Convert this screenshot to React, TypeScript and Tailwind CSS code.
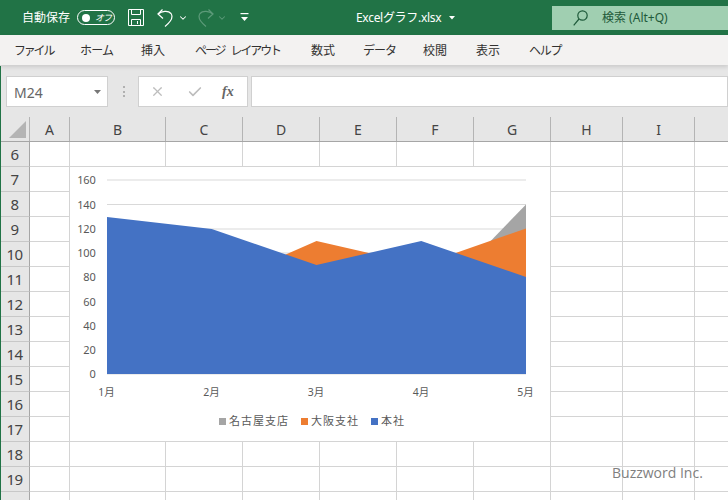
import { ChevronDown, Check, X } from "lucide-react";

const font = "font-['Noto_Sans','Noto_Sans_CJK_JP',sans-serif]";

const columns = [
  { name: "A", w: "w-[40px]" },
  { name: "B", w: "w-[96px]" },
  { name: "C", w: "w-[77px]" },
  { name: "D", w: "w-[77px]" },
  { name: "E", w: "w-[77px]" },
  { name: "F", w: "w-[77px]" },
  { name: "G", w: "w-[77px]" },
  { name: "H", w: "w-[72px]" },
  { name: "I", w: "w-[72px]" },
  { name: "", w: "w-[40px]" },
];

const rows = [6, 7, 8, 9, 10, 11, 12, 13, 14, 15, 16, 17, 18, 19, 20];

const tabs = [
  { label: "ファイル", cls: "w-[38px] ml-[14px] tracking-[-2.2px]" },
  { label: "ホーム", cls: "w-[34px] ml-[28px] tracking-[-0.8px]" },
  { label: "挿入", cls: "w-[26px] ml-[27px] tracking-[0px]" },
  { label: "ページ レイアウト", cls: "w-[87px] ml-[28px] tracking-[-2.1px] [word-spacing:5px]" },
  { label: "数式", cls: "w-[26px] ml-[29px] tracking-[0px]" },
  { label: "データ", cls: "w-[33px] ml-[26px] tracking-[-1px]" },
  { label: "校閲", cls: "w-[26px] ml-[27px] tracking-[0px]" },
  { label: "表示", cls: "w-[26px] ml-[27px] tracking-[0px]" },
  { label: "ヘルプ", cls: "w-[32px] ml-[27px] tracking-[-1.2px]" },
];

function TitleBar() {
  return (
    <div className="h-[35px] bg-[#217346] flex items-center text-white shrink-0 relative">
      <span className="ml-[22px] text-[12px] w-[48px] whitespace-nowrap">自動保存</span>
      <div className="ml-[7px] w-[38px] h-[15px] rounded-full border border-white flex items-center justify-between pl-[4px] pr-[3px]">
        <div className="w-[8px] h-[8px] rounded-full bg-white" />
        <span className="text-[9px] italic leading-none tracking-[-1px]">オフ</span>
      </div>
      <svg className="ml-[13px]" width="16" height="17" viewBox="0 0 16 17" fill="none" stroke="#fff" strokeWidth="1">
        <path d="M0.5 0.5h15v16h-15z" />
        <path d="M3.5 0.5v5h9v-5" />
        <path d="M3.5 16.5v-6h9v6" />
        <path d="M9.5 12v3" />
      </svg>
      <svg className="ml-[13px]" width="16" height="18" viewBox="0 0 16 18" fill="none" stroke="#fff" strokeWidth="1.2">
        <path d="M5.500 0.500L1 5l5 4.500" />
        <path d="M1 5C5 2 11 1 14 4.500 17 9 13 13.500 8 17.500" />
      </svg>
      <ChevronDown className="ml-[5px] text-white" size={10} strokeWidth={2.5} />
      <svg className="ml-[10px]" width="16" height="18" viewBox="0 0 16 18" fill="none" stroke="#5c9a79" strokeWidth="1.2">
        <path d="M10.500 0.500L15 5l-5 4.500" />
        <path d="M15 5C11 2 5 1 2 4.500-1 9 3 13.500 8 17.500" />
      </svg>
      <ChevronDown className="ml-[3px] text-[#5c9a79]" size={10} strokeWidth={2.5} />
      <svg className="ml-[13px]" width="9" height="9" viewBox="0 0 9 9" fill="#fff">
        <rect x="0.500" y="0" width="8" height="1.200" />
        <path d="M1 4h7l-3.500 4z" />
      </svg>
      <div className="absolute left-[356px] top-0 h-[35px] flex items-center">
        <span className="text-[12px] tracking-[-0.3px] whitespace-nowrap">Excelグラフ.xlsx</span>
        <svg className="ml-[8px]" width="6" height="4" viewBox="0 0 6 4" fill="#fff"><path d="M0 0h6l-3 3.500z" /></svg>
      </div>
      <div className="absolute left-[552px] top-[6px] w-[176px] h-[24px] bg-[#a0cfb1] flex items-center text-[#1e5a3a]">
        <svg className="ml-[21px]" width="15" height="16" viewBox="0 0 15 16" fill="none" stroke="currentColor" strokeWidth="1.2">
          <circle cx="9.500" cy="5.500" r="4.700" />
          <path d="M6 9L0.700 15.300" />
        </svg>
        <span className="ml-[14px] text-[12px] whitespace-nowrap">検索 (Alt+Q)</span>
      </div>
    </div>
  );
}

function RibbonTabs() {
  return (
    <div className="h-[30px] pt-[1px] bg-[#f3f2f1] flex items-center text-[12px] text-[#323130] shrink-0 shadow-[0_2px_4px_rgba(0,0,0,0.12)] z-10">
      {tabs.map((t) => (
        <span key={t.label} className={`${t.cls} whitespace-pre`}>{t.label}</span>
      ))}
    </div>
  );
}

function FormulaBar() {
  return (
    <div className="h-[52px] bg-[#e6e6e6] flex items-start pt-[11px] pl-[6px] shrink-0">
      <div className="w-[102px] h-[31px] pt-[1px] bg-white border border-[#d0d0d0] flex items-center justify-between pl-[7px] pr-[6px] text-[14px] text-[#666]">
        <span>M24</span>
        <svg width="7" height="4" viewBox="0 0 7 4" fill="#777"><path d="M0 0h7l-3.500 4z" /></svg>
      </div>
      <div className="ml-[14px] w-[3px] h-[11px] mt-[10px] flex flex-col justify-between items-center">
        <div className="w-[2px] h-[2px] bg-[#b0b0b0]" />
        <div className="w-[2px] h-[2px] bg-[#b0b0b0]" />
        <div className="w-[2px] h-[2px] bg-[#b0b0b0]" />
      </div>
      <div className="ml-[13px] w-[110px] h-[31px] bg-white border border-[#d0d0d0] flex items-center text-[#bdbdbd]">
        <X className="ml-[11px]" size={15} strokeWidth={2} />
        <Check className="ml-[22px]" size={16} strokeWidth={2.5} />
        <span className="ml-[19px] text-[14px] italic font-bold text-[#666] font-['Liberation_Serif',serif] whitespace-nowrap">fx</span>
      </div>
      <div className="ml-[3px] flex-1 h-[31px] bg-white border border-[#d0d0d0]" />
    </div>
  );
}

function ColumnHeader() {
  return (
    <div className="flex h-[25px] border-b border-[#a6a6a6] bg-[#e6e6e6]">
      <div className="w-[30px] shrink-0 border-r border-[#b4b4b4] flex items-end justify-end pr-[3px] pb-[3px]">
        <svg width="17" height="17" viewBox="0 0 17 17" fill="#b4b4b4"><path d="M17 0v17H0z" /></svg>
      </div>
      {columns.map((c) => (
        <div key={c.w + c.name} className={`${c.w} shrink-0 border-r border-[#b4b4b4] flex items-center justify-center text-[14px] text-[#444]`}>
          {c.name}
        </div>
      ))}
    </div>
  );
}

function SheetRows() {
  return (
    <>
      {rows.map((r) => (
        <div key={r} className="flex h-[25px]">
          <div className="w-[30px] shrink-0 bg-[#e6e6e6] border-r border-b border-r-[#a6a6a6] border-b-[#c8c8c8] flex items-center justify-center text-[15px] tracking-[-0.5px] text-[#444]">
            {r}
          </div>
          {columns.map((c) => (
            <div key={c.w + c.name} className={`${c.w} shrink-0 border-r border-b border-[#d4d4d4] bg-white`} />
          ))}
        </div>
      ))}
    </>
  );
}

// y軸のラベルと目盛り線
const ticks = [
  { v: 160, y: 180 },
  { v: 140, y: 204.500 },
  { v: 120, y: 229 },
  { v: 100, y: 253 },
  { v: 80, y: 277 },
  { v: 60, y: 301.500 },
  { v: 40, y: 326 },
  { v: 20, y: 350 },
  { v: 0, y: 374 },
];
const months = [
  { m: "1月", x: 106.500 },
  { m: "2月", x: 211.500 },
  { m: "3月", x: 316 },
  { m: "4月", x: 421 },
  { m: "5月", x: 525.500 },
];

function Chart() {
  return (
    <div className="absolute left-[70px] top-[50px] w-[480px] h-[274px] bg-white">
      <svg width="480" height="274" viewBox="70 167 480 274" className="block" fontFamily="'Noto Sans','Noto Sans CJK JP',sans-serif" fontSize="11" fill="#595959">
        {ticks.map((t) => (
          <g key={t.v}>
            <line x1="107" x2="526" y1={t.y} y2={t.y} stroke="#d9d9d9" strokeWidth="1" />
            <text x="95.500" y={t.y + 4} textAnchor="end" letterSpacing="-0.2">{t.v}</text>
          </g>
        ))}
        <polygon points="421,313 526,204.500 526,374 421,374" fill="#a5a5a5" />
        <polygon points="211.750,287 316.500,241 421.250,265 526,228.500 526,374 211.750,374" fill="#ed7d31" />
        <polygon points="107,217 211.750,229 316.500,265 421.250,241 526,277 526,374 107,374" fill="#4472c4" />
        {months.map((m) => (
          <text key={m.m} x={m.x} y="396" textAnchor="middle" fontSize="10.500">{m.m}</text>
        ))}
        <rect x="219" y="418" width="7" height="7" fill="#a5a5a5" />
        <text x="229" y="425" letterSpacing="1">名古屋支店</text>
        <rect x="301" y="418" width="7" height="7" fill="#ed7d31" />
        <text x="311" y="425" letterSpacing="1">大阪支社</text>
        <rect x="371" y="418" width="7" height="7" fill="#4472c4" />
        <text x="381" y="425" letterSpacing="1">本社</text>
      </svg>
    </div>
  );
}

export default function App() {
  return (
    <div className={`${font} w-[728px] h-[500px] overflow-hidden flex flex-col bg-white relative`}>
      <TitleBar />
      <RibbonTabs />
      <FormulaBar />
      <div className="relative flex-1 overflow-hidden">
        <ColumnHeader />
        <SheetRows />
        <Chart />
      </div>
      {/* 左端の緑の線 */}
      <div className="absolute left-0 top-[66px] bottom-0 w-[1px] bg-[#217346] z-20" />
      <span className="absolute left-[612px] top-[462px] text-[14px] font-medium text-[#7f7f7f] font-['Open_Sans',sans-serif] whitespace-nowrap">
        Buzzword Inc.
      </span>
    </div>
  );
}
